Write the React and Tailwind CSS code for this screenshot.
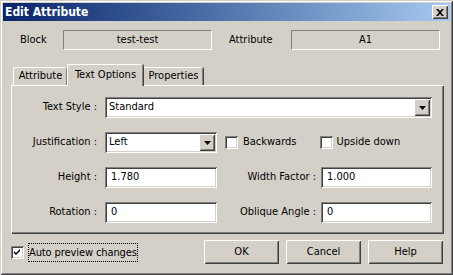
import React from "react";

const raised =
  "shadow-[inset_1px_1px_#ffffff,inset_-1px_-1px_#404040,inset_2px_2px_#d4d0c8,inset_-2px_-2px_#808080]";
const sunken =
  "shadow-[inset_1px_1px_#808080,inset_-1px_-1px_#ffffff,inset_2px_2px_#404040,inset_-2px_-2px_#d4d0c8]";

const DropArrow = () => (
  <div className={`flex h-full w-[16px] items-center justify-center bg-[#d4d0c8] ${raised}`}>
    <svg width="7" height="4" viewBox="0 0 7 4">
      <polygon points="0,0 7,0 3.5,4" fill="#000" />
    </svg>
  </div>
);

const Select = ({ value, width }) => (
  <div className={`flex h-[21px] ${width} bg-white p-[2px] ${sunken}`}>
    <div className="flex flex-1 items-center pl-[2px]">{value}</div>
    <DropArrow />
  </div>
);

const Input = ({ value, width }) => (
  <div className={`flex h-[21px] ${width} items-center bg-white pl-[6px] ${sunken}`}>{value}</div>
);

const Checkbox = ({ checked }) => (
  <div className={`flex h-[13px] w-[13px] shrink-0 items-center justify-center bg-white ${sunken}`}>
    {checked && (
      <svg width="7" height="7" viewBox="0 0 7 7">
        <path d="M0 2 L2 4 L6 0 L6 2 L2 6 L0 4 Z" fill="#000" />
      </svg>
    )}
  </div>
);

const Tab = ({ label, selected, width }) =>
  selected ? (
    <div
      className={`relative z-10 -mb-px flex h-[22px] ${width} items-start justify-center rounded-t-[2px] border-t border-l border-white bg-[#d4d0c8] pt-[2px] shadow-[inset_-1px_0_#808080,1px_0_#404040]`}
    >
      {label}
    </div>
  ) : (
    <div
      className={`flex h-[18px] ${width} items-center justify-center rounded-t-[2px] border-t border-l border-white shadow-[inset_-1px_0_#808080,1px_0_#404040]`}
    >
      {label}
    </div>
  );

const Button = ({ label }) => (
  <div className={`flex h-[24px] w-[75px] items-center justify-center bg-[#d4d0c8] ${raised}`}>{label}</div>
);

export default function App() {
  return (
    <div
      className="flex h-[275px] w-[453px] flex-col bg-[#d4d0c8] p-[3px] text-[11px] text-black shadow-[inset_1px_1px_#d4d0c8,inset_-1px_-1px_#404040,inset_2px_2px_#ffffff,inset_-2px_-2px_#808080]"
      style={{ fontFamily: '"DejaVu Sans Condensed", "Liberation Sans", sans-serif' }}
    >
      {/* title bar */}
      <div className="flex h-[18px] items-center justify-between bg-gradient-to-r from-[#0a246a] to-[#a6caf0] pr-[2px] pl-[2px]">
        <span className="text-[12px] font-bold text-white">Edit Attribute</span>
        <div className={`flex h-[14px] w-[16px] items-center justify-center bg-[#d4d0c8] ${raised}`}>
          <svg width="8" height="7" viewBox="0 0 8 7">
            <path d="M0 0h2l2 2 2-2h2L5 3.5 8 7H6L4 5 2 7H0l3-3.5z" fill="#000" />
          </svg>
        </div>
      </div>

      {/* block / attribute row */}
      <div className="mt-[9px] flex h-[20px] items-center pl-[17px]">
        <span className="w-[43px]">Block</span>
        <div className="flex h-[20px] w-[149px] items-center justify-center border border-t-[#808080] border-r-white border-b-white border-l-[#808080]">
          test-test
        </div>
        <span className="ml-[17px] w-[62px]">Attribute</span>
        <div className="flex h-[20px] w-[149px] items-center justify-center border border-t-[#808080] border-r-white border-b-white border-l-[#808080]">
          A1
        </div>
      </div>

      {/* tabs */}
      <div className="mt-[14px] flex h-[21px] items-end pl-[10px]">
        <Tab label="Attribute" width="w-[54px]" />
        <Tab label="Text Options" width="w-[76px]" selected />
        <Tab label="Properties" width="w-[60px]" />
      </div>

      {/* tab panel */}
      <div className="ml-[8px] flex h-[148px] w-[432px] flex-col gap-[14px] border-t border-l border-white pt-[11px] shadow-[inset_-1px_-1px_#808080,1px_1px_#404040]">
        <div className="flex items-center">
          <span className="w-[85px] text-right">Text Style :</span>
          <div className="ml-[8px]">
            <Select value="Standard" width="w-[327px]" />
          </div>
        </div>
        <div className="flex items-center">
          <span className="w-[85px] text-right">Justification :</span>
          <div className="ml-[8px]">
            <Select value="Left" width="w-[112px]" />
          </div>
          <div className="ml-[8px] flex items-center gap-[5px]">
            <Checkbox />
            <span>Backwards</span>
          </div>
          <div className="ml-[23px] flex items-center gap-[4px]">
            <Checkbox />
            <span>Upside down</span>
          </div>
        </div>
        <div className="flex items-center">
          <span className="w-[85px] text-right">Height :</span>
          <div className="ml-[8px]">
            <Input value="1.780" width="w-[112px]" />
          </div>
          <span className="w-[99px] text-right">Width Factor :</span>
          <div className="ml-[5px]">
            <Input value="1.000" width="w-[111px]" />
          </div>
        </div>
        <div className="flex items-center">
          <span className="w-[85px] text-right">Rotation :</span>
          <div className="ml-[8px]">
            <Input value="0" width="w-[112px]" />
          </div>
          <span className="w-[99px] text-right">Oblique Angle :</span>
          <div className="ml-[5px]">
            <Input value="0" width="w-[111px]" />
          </div>
        </div>
      </div>

      {/* bottom row */}
      <div className="mt-[7px] flex h-[24px] items-center">
        <div className="ml-[8px] flex items-center gap-[4px]">
          <Checkbox checked />
          <span className="border border-dotted border-black py-[2px] leading-[13px] tracking-[-0.1px]">
            Auto preview changes
          </span>
        </div>
        <div className="ml-auto mr-[7px] flex gap-[7px]">
          <Button label="OK" />
          <Button label="Cancel" />
          <Button label="Help" />
        </div>
      </div>
    </div>
  );
}
